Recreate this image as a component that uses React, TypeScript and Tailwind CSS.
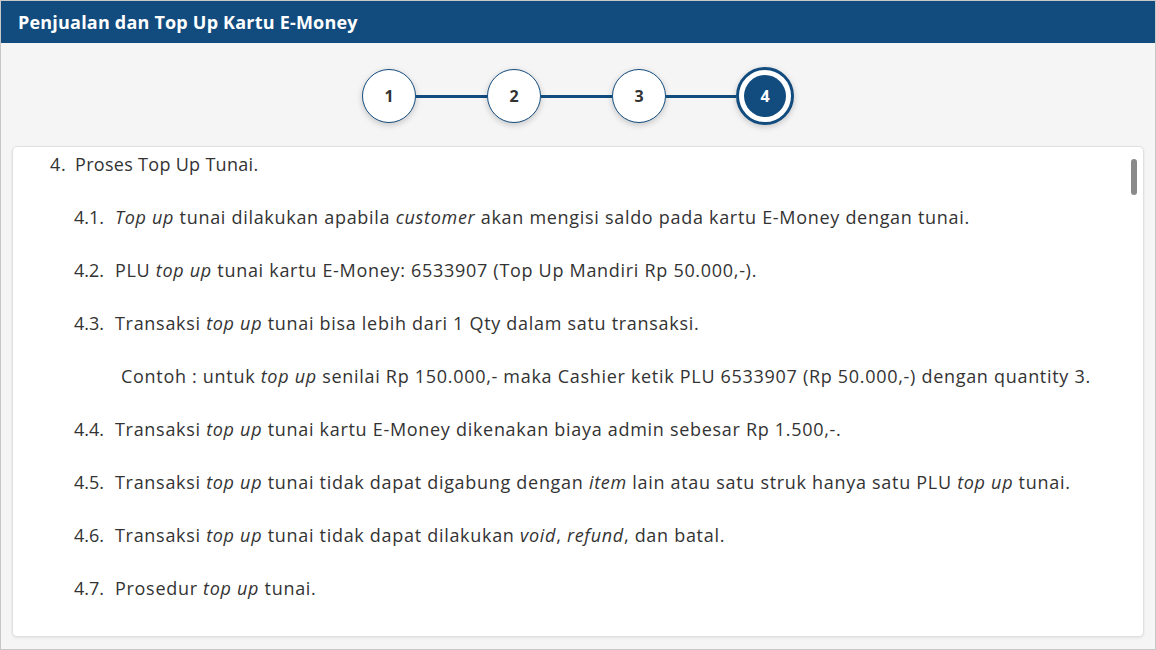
import React from "react";

const Step = ({ n, active }: { n: number; active?: boolean }) =>
  active ? (
    <div className="w-[58px] h-[58px] rounded-full border-[3px] border-[#124c7e] bg-white flex items-center justify-center shadow-[0_2px_6px_rgba(0,0,0,0.2)] shrink-0">
      <div className="w-[42px] h-[42px] rounded-full bg-[#124c7e] text-white flex items-center justify-center text-[16px] font-bold">
        {n}
      </div>
    </div>
  ) : (
    <div className="w-[54px] h-[54px] rounded-full border border-[#124c7e] bg-white flex items-center justify-center text-[16px] font-bold text-[#333] shadow-[0_2px_6px_rgba(0,0,0,0.2)] shrink-0">
      {n}
    </div>
  );

const Line = ({ w }: { w: string }) => <div className={`${w} h-[3px] bg-[#124c7e] shrink-0`} />;

const Item = ({ num, children }: { num: string; children: React.ReactNode }) => (
  <div className="flex pl-[61px]">
    <span className="w-[41px] shrink-0 tracking-normal">{num}</span>
    <span>{children}</span>
  </div>
);

export default function App() {
  return (
    <div
      className="w-[1156px] h-[650px] border border-[#c8c8c8] bg-[#f5f5f5] flex flex-col overflow-hidden"
      style={{ fontFamily: "'Open Sans', 'Liberation Sans', sans-serif" }}
    >
      <div className="h-[42px] bg-[#124c7e] flex items-center px-[17px] shrink-0">
        <span className="text-white font-bold text-[18px] tracking-[0.2px]">Penjualan dan Top Up Kartu E-Money</span>
      </div>
      <div className="flex items-center justify-center pt-[24px] pb-[21px]">
        <Step n={1} />
        <Line w="w-[71px]" />
        <Step n={2} />
        <Line w="w-[71px]" />
        <Step n={3} />
        <Line w="w-[70px]" />
        <Step n={4} active />
      </div>
      <div className="mx-[11px] mb-[12px] flex-1 bg-white border border-[#e0e0e0] rounded-[5px] shadow-[0_1px_3px_rgba(0,0,0,0.08)] relative overflow-hidden">
        <div className="text-[18px] leading-[20px] tracking-[0.7px] text-[#333] flex flex-col gap-[33px] pt-[7px]">
          <div className="flex pl-[37px]">
            <span className="w-[25px] shrink-0">4.</span>
            <span className="tracking-[0.3px]">Proses Top Up Tunai.</span>
          </div>
          <Item num="4.1.">
            <i>Top up</i> tunai dilakukan apabila <i>customer</i> akan mengisi saldo pada kartu E-Money dengan tunai.
          </Item>
          <Item num="4.2.">
            PLU <i>top up</i> tunai kartu E-Money: 6533907 (Top Up Mandiri Rp 50.000,-).
          </Item>
          <Item num="4.3.">
            Transaksi <i>top up</i> tunai bisa lebih dari 1 Qty dalam satu transaksi.
          </Item>
          <div className="pl-[108px]">
            Contoh : untuk <i>top up</i> senilai Rp 150.000,- maka Cashier ketik PLU 6533907 (Rp 50.000,-) dengan quantity 3.
          </div>
          <Item num="4.4.">
            Transaksi <i>top up</i> tunai kartu E-Money dikenakan biaya admin sebesar Rp 1.500,-.
          </Item>
          <Item num="4.5.">
            Transaksi <i>top up</i> tunai tidak dapat digabung dengan <i>item</i> lain atau satu struk hanya satu PLU <i>top up</i> tunai.
          </Item>
          <Item num="4.6.">
            Transaksi <i>top up</i> tunai tidak dapat dilakukan <i>void</i>, <i>refund</i>, dan batal.
          </Item>
          <Item num="4.7.">
            Prosedur <i>top up</i> tunai.
          </Item>
        </div>
        <div className="absolute right-[6px] top-[12px] w-[6px] h-[36px] rounded-full bg-[#8a8a8a]" />
      </div>
    </div>
  );
}
